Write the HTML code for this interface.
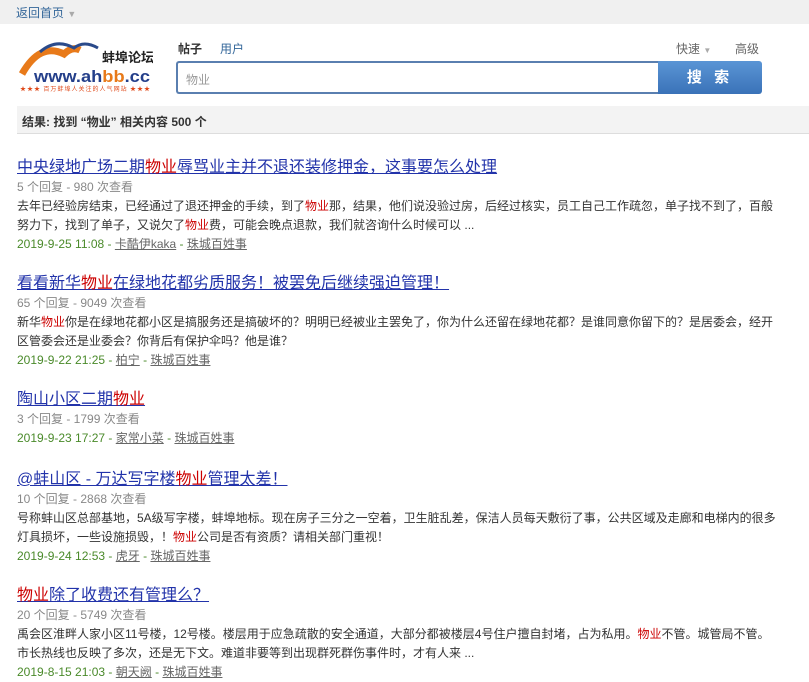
<!DOCTYPE html>
<html><head><meta charset="utf-8"><style>
body{margin:0;width:809px;height:675px;overflow:hidden;background:#fff;font-family:"Liberation Sans","Noto Sans CJK SC",sans-serif;font-size:12px;color:#333}
.top{position:absolute;left:0;top:0;width:809px;height:24px;background:#f0f0f0}
.top span{position:absolute;left:16px;top:4px;color:#336699;font-size:12px}
.abs{position:absolute}
.tab{font-size:12px;color:#336699}
.res{position:absolute;left:17px;top:106px;width:792px;height:27px;background:#f3f3f3;border-bottom:1px solid #ddd}
.res span{position:absolute;left:5px;top:7px;font-weight:bold;font-size:12px;color:#333}
.item{position:absolute;left:17px;width:768px}
.t{font-size:16px;color:#2233aa;text-decoration:underline;line-height:20px;white-space:nowrap}
.r{color:#c00}
.m{color:#888;line-height:19px}
.d{color:#333;line-height:19px}
.g{color:#4a8a2a;line-height:19px}
.g u{color:#666}
</style></head><body>
<div class="top"><span>返回首页 <span style="position:static;color:#aaa;font-size:9px">▼</span></span></div>
<svg class="abs" style="left:18px;top:38px" width="135" height="55" viewBox="0 0 135 55">
<path d="M4 36 Q22 4 46 16 Q54 8 62 12" stroke="#e87a1a" stroke-width="7" fill="none"/>
<path d="M22 14 Q38 0 56 10 Q66 2 80 10" stroke="#2a4a8a" stroke-width="3" fill="none"/>
<text x="84" y="24" font-size="13" font-weight="bold" fill="#222" font-family="Noto Sans CJK SC">蚌埠论坛</text>
<text x="16" y="44" font-size="17" font-weight="bold" fill="#243f8a" font-family="Liberation Sans" textLength="116" lengthAdjust="spacingAndGlyphs">www.ah<tspan fill="#e87a1a">bb</tspan>.cc</text>
<text x="2" y="53" font-size="6" fill="#e04a1a" font-family="Noto Sans CJK SC" textLength="130">★★★ 百万蚌埠人关注的人气网站 ★★★</text>
</svg>
<div class="abs" style="left:178px;top:40px;font-size:12px;font-weight:bold;color:#333">帖子</div>
<div class="abs tab" style="left:220px;top:40px">用户</div>
<div class="abs tab" style="left:676px;top:40px;color:#666">快速 <span style="color:#aaa;font-size:8px">▼</span></div>
<div class="abs tab" style="left:735px;top:40px;color:#666">高级</div>
<div class="abs" style="left:176px;top:61px;width:480px;height:29px;border:2px solid #5a7fb0;border-right:none;background:#fff;border-radius:3px 0 0 3px"><span style="position:absolute;left:8px;top:8px;color:#999">物业</span></div>
<div class="abs" style="left:658px;top:61px;width:104px;height:33px;background:linear-gradient(#5a95d5,#3a72b8);border-radius:0 3px 3px 0;color:#fff;font-weight:bold;font-size:15px;text-align:center;line-height:33px;letter-spacing:4px">搜 索</div>
<div class="res"><span>结果: 找到 “物业” 相关内容 500 个</span></div>

<div class="item" style="top:158px"><div class="t">中央绿地广场二期<span class="r">物业</span>辱骂业主并不退还装修押金，这事要怎么处理</div>
<div class="m">5 个回复 - 980 次查看</div>
<div class="d">去年已经验房结束，已经通过了退还押金的手续，到了<span class="r">物业</span>那，结果，他们说没验过房，后经过核实，员工自己工作疏忽，单子找不到了，百般努力下，找到了单子，又说欠了<span class="r">物业</span>费，可能会晚点退款，我们就咨询什么时候可以 ...</div>
<div class="g">2019-9-25 11:08 - <u>卡酷伊kaka</u> - <u>珠城百姓事</u></div></div>

<div class="item" style="top:274px"><div class="t">看看新华<span class="r">物业</span>在绿地花都劣质服务！被罢免后继续强迫管理！</div>
<div class="m">65 个回复 - 9049 次查看</div>
<div class="d">新华<span class="r">物业</span>你是在绿地花都小区是搞服务还是搞破坏的？明明已经被业主罢免了，你为什么还留在绿地花都？是谁同意你留下的？是居委会，经开区管委会还是业委会？你背后有保护伞吗？他是谁？</div>
<div class="g">2019-9-22 21:25 - <u>柏宁</u> - <u>珠城百姓事</u></div></div>

<div class="item" style="top:390px"><div class="t">陶山小区二期<span class="r">物业</span></div>
<div class="m">3 个回复 - 1799 次查看</div>
<div class="g">2019-9-23 17:27 - <u>家常小菜</u> - <u>珠城百姓事</u></div></div>

<div class="item" style="top:470px"><div class="t">@蚌山区 - 万达写字楼<span class="r">物业</span>管理太差！</div>
<div class="m">10 个回复 - 2868 次查看</div>
<div class="d">号称蚌山区总部基地，5A级写字楼，蚌埠地标。现在房子三分之一空着，卫生脏乱差，保洁人员每天敷衍了事，公共区域及走廊和电梯内的很多灯具损坏，一些设施损毁，！<span class="r">物业</span>公司是否有资质？请相关部门重视！</div>
<div class="g">2019-9-24 12:53 - <u>虎牙</u> - <u>珠城百姓事</u></div></div>

<div class="item" style="top:586px"><div class="t"><span class="r">物业</span>除了收费还有管理么？</div>
<div class="m">20 个回复 - 5749 次查看</div>
<div class="d">禹会区淮畔人家小区11号楼，12号楼。楼层用于应急疏散的安全通道，大部分都被楼层4号住户擅自封堵，占为私用。<span class="r">物业</span>不管。城管局不管。<br>市长热线也反映了多次，还是无下文。难道非要等到出现群死群伤事件时，才有人来 ...</div>
<div class="g">2019-8-15 21:03 - <u>朝天阙</u> - <u>珠城百姓事</u></div></div>
</body></html>
